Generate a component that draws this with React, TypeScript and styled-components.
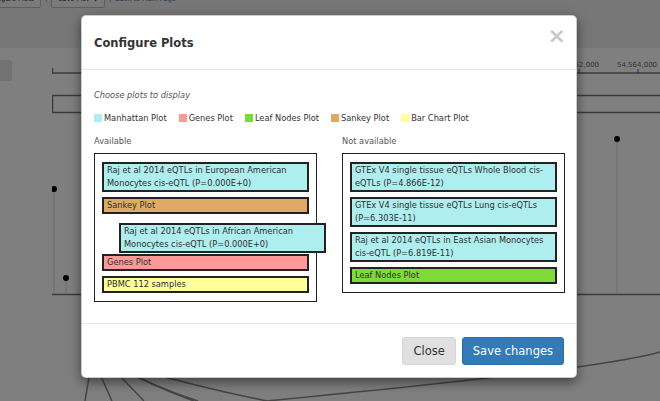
import React from "react";
import styled, { createGlobalStyle } from "styled-components";

const GlobalStyle = createGlobalStyle`
  html, body { margin: 0; padding: 0; overflow: hidden; background: #fff; }
  body { font-family: "DejaVu Sans", Verdana, sans-serif; }
  * { box-sizing: border-box; }
`;

const Page = styled.div`
  position: relative;
  width: 660px;
  height: 401px;
  overflow: hidden;
  background: #fff;
`;

const Toolbar = styled.div`
  height: 59px;
  margin-top: -11px;
  background: #eee;
  display: flex;
  align-items: flex-start;
  gap: 4px;
  padding-top: 1px;
  font-size: 6.6px;
  color: #333;
`;

const ToolButton = styled.div<{ $offset?: number }>`
  height: 18px;
  padding: 0 6px;
  margin-left: ${(p) => p.$offset ?? 0}px;
  display: flex;
  align-items: center;
  gap: 4px;
  border: 1px solid #bdbdbd;
  border-radius: 2px;
  background: #f5f5f5;
  white-space: nowrap;
`;

const Sep = styled.span`
  line-height: 18px;
  color: #888;
`;

const ToolLink = styled.span`
  line-height: 18px;
  color: #2a6fb0;
`;

const PlotRow = styled.div`
  display: flex;
  height: 353px;
`;

const Gutter = styled.div`
  width: 52px;
  flex: none;
`;

const SideButton = styled.div`
  width: 16px;
  height: 21px;
  margin: 12px 0 0 -4px;
  border-radius: 3px;
  background: #e4e4e4;
`;

const Overlay = styled.div`
  position: absolute;
  inset: 0;
  background: rgba(0, 0, 0, 0.5);
  display: flex;
  justify-content: center;
  align-items: flex-start;
  padding: 15px 2px 0 0;
`;

const Modal = styled.div`
  width: 496px;
  background: #fff;
  border: 1px solid rgba(0, 0, 0, 0.2);
  border-radius: 5px;
  box-shadow: 0 4px 12px rgba(0, 0, 0, 0.5);
  color: #333;
`;

const Header = styled.div`
  height: 54px;
  padding: 0 12px;
  display: flex;
  align-items: center;
  justify-content: space-between;
  border-bottom: 1px solid #e5e5e5;
`;

const Title = styled.h4`
  margin: 0;
  font-size: 11.5px;
  font-weight: bold;
  line-height: 14px;
  color: #333;
`;

const CloseX = styled.span`
  align-self: flex-start;
  margin: 9px -2px 0 0;
  font-size: 22px;
  line-height: 22px;
  font-weight: bold;
  color: #c8c8c8;
`;

const Body = styled.div`
  padding: 19px 12px 21px 12px;
  font-size: 8.25px;
`;

const Intro = styled.p`
  margin: 0 0 11px;
  line-height: 12px;
  font-style: italic;
  color: #555;
`;

const Legend = styled.div`
  display: flex;
  gap: 12px;
  line-height: 12px;
  margin-bottom: 11px;
  color: #333;
`;

const LegendItem = styled.span`
  display: flex;
  align-items: center;
  gap: 2px;
`;

const Swatch = styled.span<{ $color: string }>`
  width: 8px;
  height: 8px;
  background: ${(p) => p.$color};
`;

const Columns = styled.div`
  display: grid;
  grid-template-columns: 223px 223px;
  column-gap: 25px;
  align-items: start;
`;

const ColumnLabel = styled.div`
  line-height: 12px;
  margin-bottom: 6px;
  color: #555;
`;

const ListBox = styled.div`
  border: 1px solid #222;
  padding: 8px 7px;
  display: flex;
  flex-direction: column;
  gap: 5px;
`;

const Item = styled.div<{ $color: string }>`
  border: 2px solid #222;
  background: ${(p) => p.$color};
  padding: 0 3px;
  line-height: 13px;
  color: #2e2e2e;
`;

const Placeholder = styled.div`
  position: relative;
  height: 30px;
`;

const DraggedItem = styled(Item)`
  position: absolute;
  top: 4px;
  left: 17px;
  width: 100%;
  z-index: 2;
`;

const Footer = styled.div`
  border-top: 1px solid #e5e5e5;
  padding: 13px 12px 12px;
  display: flex;
  justify-content: flex-end;
  gap: 6px;
`;

const Button = styled.button<{ $primary?: boolean }>`
  height: 28px;
  padding: 0 10px;
  font-family: "DejaVu Sans", Verdana, sans-serif;
  font-size: 11.5px;
  border-radius: 3px;
  border: 1px solid ${(p) => (p.$primary ? "#2e6da4" : "#d6d6d6")};
  background: ${(p) => (p.$primary ? "#337ab7" : "#e0e0e0")};
  color: ${(p) => (p.$primary ? "#fff" : "#333")};
`;

const C = {
  cyan: "#afeeee",
  sankey: "#e0aa64",
  genes: "#ff9999",
  leaf: "#80da3a",
  bar: "#ffff99",
};

const Chart = () => (
  <svg width={608} height={353} viewBox="0 0 608 353">
    <line x1={0.5} y1={20} x2={0.5} y2={25} stroke="#777" strokeWidth={1.5} />
    <line x1={0} y1={25} x2={608} y2={25} stroke="#777" strokeWidth={1.5} />
    <line x1={527} y1={21} x2={527} y2={25} stroke="#4444ff" strokeWidth={1} />
    <line x1={586} y1={21} x2={586} y2={25} stroke="#4444ff" strokeWidth={1} />
    <text x={527} y={19} fontSize={7} fill="#666" textAnchor="middle" fontFamily="DejaVu Sans, sans-serif">
      54,562,000
    </text>
    <text x={585} y={19} fontSize={7} fill="#666" textAnchor="middle" fontFamily="DejaVu Sans, sans-serif">
      54,564,000
    </text>
    <rect x={0.5} y={47.5} width={640} height={17} fill="none" stroke="#777" strokeWidth={1.5} />
    <line x1={2} y1={141} x2={2} y2={246} stroke="#d8d8d8" strokeWidth={1} />
    <line x1={14} y1={230} x2={14} y2={246} stroke="#d8d8d8" strokeWidth={1} />
    <line x1={565} y1={91} x2={565} y2={246} stroke="#d8d8d8" strokeWidth={1} />
    <line x1={0} y1={246.5} x2={608} y2={246.5} stroke="#777" strokeWidth={1.5} />
    <circle cx={2} cy={141} r={3} fill="#000" />
    <circle cx={14} cy={230} r={3} fill="#000" />
    <circle cx={565} cy={91} r={3} fill="#000" />
    <g fill="none" stroke="#8a8a8a" strokeWidth={1.5}>
      <path d="M 42 300 L 33 353" />
      <path d="M 40 310 Q 50 330 60 353" />
      <path d="M 50 310 Q 75 335 92 353" />
      <path d="M 60 315 Q 100 338 142 353" />
      <path d="M 62 318 Q 105 340 146 353" />
      <path d="M 80 320 Q 150 340 215 353" />
      <path d="M 608 304 C 560 318 400 335 215 353" />
    </g>
  </svg>
);

export default function App() {
  return (
    <>
      <GlobalStyle />
      <Page>
        <Toolbar>
          <ToolButton $offset={-23}>Configure Plots</ToolButton>
          <Sep>|</Sep>
          <ToolButton>
            Save Plot <span>▼</span>
          </ToolButton>
          <Sep>|</Sep>
          <ToolLink>Back to Main Page</ToolLink>
        </Toolbar>
        <PlotRow>
          <Gutter>
            <SideButton />
          </Gutter>
          <Chart />
        </PlotRow>
        <Overlay>
          <Modal>
            <Header>
              <Title>Configure Plots</Title>
              <CloseX>×</CloseX>
            </Header>
            <Body>
              <Intro>Choose plots to display</Intro>
              <Legend>
                <LegendItem>
                  <Swatch $color={C.cyan} />
                  Manhattan Plot
                </LegendItem>
                <LegendItem>
                  <Swatch $color={C.genes} />
                  Genes Plot
                </LegendItem>
                <LegendItem>
                  <Swatch $color="#77dd33" />
                  Leaf Nodes Plot
                </LegendItem>
                <LegendItem>
                  <Swatch $color={C.sankey} />
                  Sankey Plot
                </LegendItem>
                <LegendItem>
                  <Swatch $color={C.bar} />
                  Bar Chart Plot
                </LegendItem>
              </Legend>
              <Columns>
                <div>
                  <ColumnLabel>Available</ColumnLabel>
                  <ListBox>
                    <Item $color={C.cyan}>
                      Raj et al 2014 eQTLs in European American Monocytes cis-eQTL (P=0.000E+0)
                    </Item>
                    <Item $color={C.sankey}>Sankey Plot</Item>
                    <Placeholder>
                      <DraggedItem $color={C.cyan}>
                        Raj et al 2014 eQTLs in African American Monocytes cis-eQTL (P=0.000E+0)
                      </DraggedItem>
                    </Placeholder>
                    <Item $color={C.genes}>Genes Plot</Item>
                    <Item $color={C.bar}>PBMC 112 samples</Item>
                  </ListBox>
                </div>
                <div>
                  <ColumnLabel>Not available</ColumnLabel>
                  <ListBox>
                    <Item $color={C.cyan}>
                      GTEx V4 single tissue eQTLs Whole Blood cis-eQTLs (P=4.866E-12)
                    </Item>
                    <Item $color={C.cyan}>
                      GTEx V4 single tissue eQTLs Lung cis-eQTLs (P=6.303E-11)
                    </Item>
                    <Item $color={C.cyan}>
                      Raj et al 2014 eQTLs in East Asian Monocytes cis-eQTL (P=6.819E-11)
                    </Item>
                    <Item $color={C.leaf}>Leaf Nodes Plot</Item>
                  </ListBox>
                </div>
              </Columns>
            </Body>
            <Footer>
              <Button>Close</Button>
              <Button $primary>Save changes</Button>
            </Footer>
          </Modal>
        </Overlay>
      </Page>
    </>
  );
}
